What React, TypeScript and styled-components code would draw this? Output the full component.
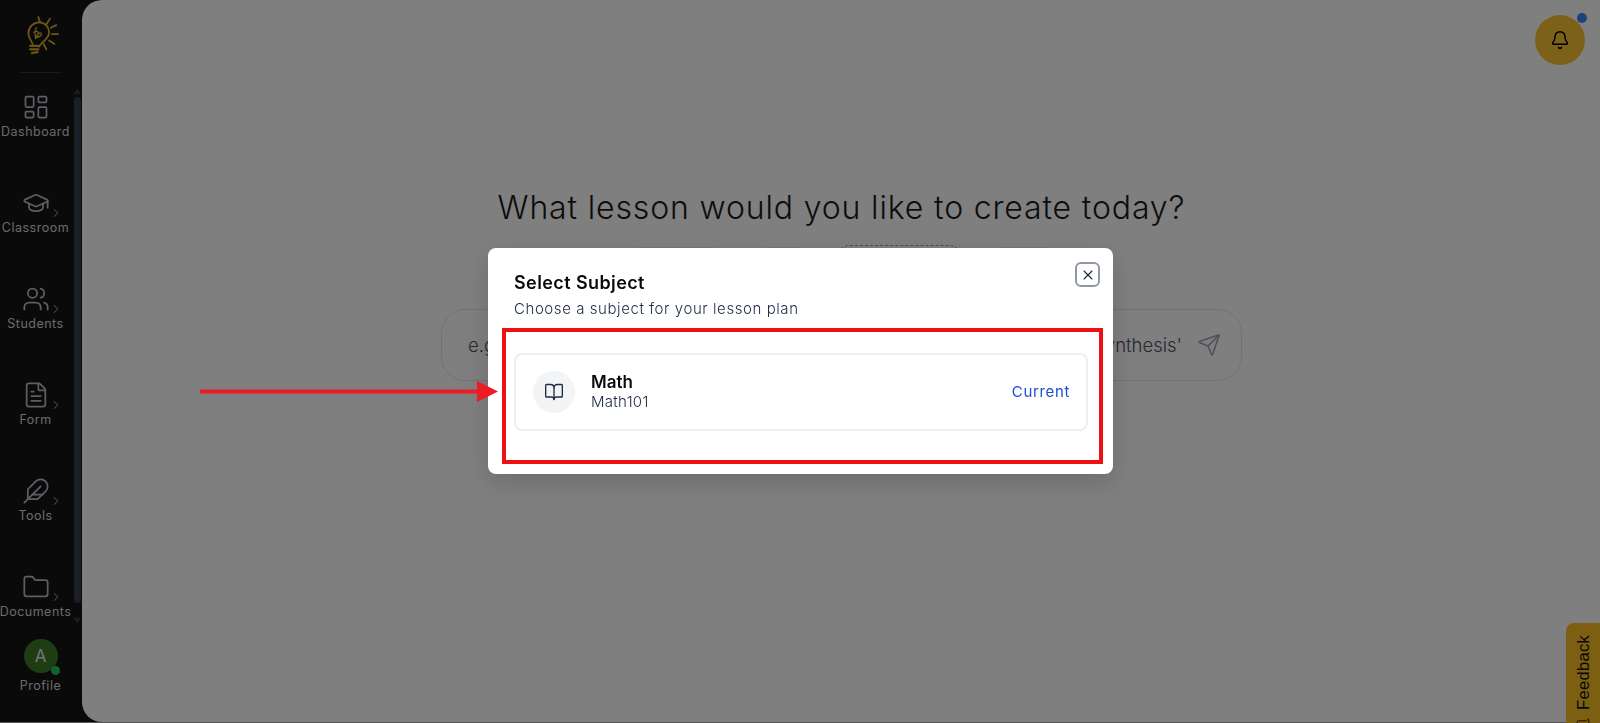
import React from 'react';
import styled, { createGlobalStyle } from 'styled-components';
import {
  Bell,
  BookOpen,
  ChevronRight,
  Feather,
  FileText,
  Folder,
  GraduationCap,
  LayoutDashboard,
  MessageSquarePlus,
  Send,
  Users,
  X,
} from 'lucide-react';

const GlobalStyle = createGlobalStyle`
  html, body {
    margin: 0;
    height: 100%;
    background: #aaaaaa;
    overflow: hidden;
    font-family: "Inter", "Open Sans", "Liberation Sans", sans-serif;
  }
`;

const Shell = styled.div`
  display: flex;
  height: 722px;
  background: #141414;
`;

const Sidebar = styled.aside`
  width: 82px;
  flex-shrink: 0;
  display: flex;
  flex-direction: column;
`;

const LogoBlock = styled.div`
  height: 73px;
  margin: 0 20px 0 20px;
  border-bottom: 1px solid #333333;
  display: flex;
  align-items: flex-start;
  justify-content: center;
  padding-top: 8px;
  box-sizing: border-box;

  svg {
    display: block;
    flex-shrink: 0;
  }
`;

const NavRow = styled.div`
  display: flex;
  height: 558px;
`;

const NavList = styled.nav`
  width: 71px;
  margin-right: 2px;
  padding-top: 20px;
  display: flex;
  flex-direction: column;
  gap: 48px;
  box-sizing: border-box;
`;

const NavItem = styled.div`
  position: relative;
  height: 48px;
  display: flex;
  flex-direction: column;
  align-items: center;
  gap: 2px;
  color: #b9bec8;
`;

const NavLabel = styled.span`
  font-size: 12.5px;
  line-height: 18px;
  letter-spacing: 0.5px;
  font-weight: 400;
  color: #d6d6d6;
  white-space: nowrap;
`;

const NavChevron = styled(ChevronRight)`
  position: absolute;
  left: 49px;
  top: 17px;
  color: #b9bec8;
`;

const ScrollRail = styled.div`
  width: 8px;
  padding-top: 16px;
  display: flex;
  flex-direction: column;
  align-items: center;
`;

const ScrollArrow = styled.div<{ $down?: boolean }>`
  width: 0;
  height: 0;
  border-left: 4px solid transparent;
  border-right: 4px solid transparent;
  ${(p) => (p.$down ? 'border-top: 5px solid #333a47;' : 'border-bottom: 5px solid #333a47;')}
`;

const ScrollThumb = styled.div`
  width: 7px;
  height: 506px;
  margin: 3px 0 15px;
  border-radius: 4px;
  background: #343d4d;
`;

const ProfileBlock = styled.div`
  padding: 8px 1px 0 0;
  display: flex;
  flex-direction: column;
  align-items: center;
  gap: 4px;
`;

const Avatar = styled.div`
  position: relative;
  width: 34px;
  height: 34px;
  border-radius: 50%;
  background: #3f7a25;
  color: #e8e8e8;
  font-size: 17px;
  display: flex;
  align-items: center;
  justify-content: center;

  &::after {
    content: '';
    position: absolute;
    right: -2px;
    bottom: -2px;
    width: 9px;
    height: 9px;
    border-radius: 50%;
    background: #22c55e;
  }
`;

const Main = styled.main`
  flex: 1;
  background: #ffffff;
  border-radius: 20px 0 0 20px;
  display: flex;
  flex-direction: column;
  align-items: center;
  padding: 186px 0 0 1px;
  box-sizing: border-box;
`;

const Heading = styled.h1`
  margin: 0;
  font-size: 32px;
  line-height: 44px;
  font-weight: 300;
  letter-spacing: 0.85px;
  color: #1a1a1a;
  white-space: nowrap;
`;

const ChipRow = styled.div`
  margin-top: 15px;
  height: 40px;
  display: flex;
  align-items: flex-end;
  gap: 24px;
`;

const Chip = styled.div<{ $width: number; $dashed?: boolean }>`
  width: ${(p) => p.$width}px;
  height: ${(p) => (p.$dashed ? 40 : 38)}px;
  box-sizing: border-box;
  border-radius: 14px;
  border: 1px ${(p) => (p.$dashed ? 'dashed #9a9a9a' : 'solid #eef0f3')};
`;

const PromptBox = styled.div`
  margin-top: 24px;
  width: 801px;
  height: 72px;
  box-sizing: border-box;
  border: 1px solid #e5e7eb;
  border-radius: 24px;
  padding: 0 20px 0 26px;
  display: flex;
  align-items: center;
  gap: 15px;
  color: #9ca3af;
`;

const PromptText = styled.span`
  flex: 1;
  font-size: 18.5px;
  font-weight: 300;
  color: #4b5563;
  white-space: nowrap;
  text-align: justify;
  text-align-last: justify;
`;

const BellButton = styled.button`
  position: fixed;
  top: 15px;
  right: 15px;
  width: 50px;
  height: 50px;
  padding: 0;
  border: none;
  border-radius: 50%;
  background: #fdc230;
  color: #000000;
  display: flex;
  align-items: center;
  justify-content: center;

  &::after {
    content: '';
    position: absolute;
    top: -2px;
    right: -2px;
    width: 10px;
    height: 10px;
    border-radius: 50%;
    background: #3b82f6;
  }
`;

const FeedbackTab = styled.div`
  position: fixed;
  right: 0;
  top: 623px;
  height: 120px;
  width: 34px;
  box-sizing: border-box;
  padding-top: 12px;
  border-radius: 8px 0 0 0;
  background: #fbbf24;
  color: #111111;
  display: flex;
  align-items: flex-start;
  justify-content: center;
`;

const FeedbackText = styled.span`
  writing-mode: vertical-rl;
  transform: rotate(180deg);
  display: flex;
  align-items: center;
  gap: 8px;
  font-family: "Liberation Sans", sans-serif;
  font-size: 16.5px;
  letter-spacing: 0.3px;
`;

const Overlay = styled.div`
  position: fixed;
  inset: 0;
  background: rgba(0, 0, 0, 0.5);
  display: flex;
  align-items: center;
  justify-content: center;
`;

const Modal = styled.section`
  position: relative;
  width: 625px;
  box-sizing: border-box;
  margin: 0 0 1px 1px;
  padding: 24px 25px 43px 26px;
  border-radius: 8px;
  background: #ffffff;
  box-shadow: 0 8px 24px rgba(0, 0, 0, 0.15);
`;

const ModalTitle = styled.h2`
  margin: 0;
  font-size: 18px;
  line-height: 22px;
  font-weight: 600;
  letter-spacing: 0.4px;
  color: #0a0a0a;
`;

const ModalHint = styled.p`
  margin: 5px 0 34px;
  font-size: 15px;
  line-height: 20px;
  font-weight: 300;
  letter-spacing: 0.57px;
  color: #1e2a44;
`;

const CloseButton = styled.button`
  position: absolute;
  top: 14px;
  right: 13px;
  width: 25px;
  height: 25px;
  padding: 0;
  box-sizing: border-box;
  border: 2px solid #9097a6;
  border-radius: 6px;
  background: #ffffff;
  color: #1f2937;
  display: flex;
  align-items: center;
  justify-content: center;
`;

const SubjectCard = styled.div`
  height: 78px;
  box-sizing: border-box;
  padding: 0 16px 0 17px;
  border: 2px solid #eceef2;
  border-radius: 8px;
  display: flex;
  align-items: center;
  gap: 16px;
`;

const SubjectIcon = styled.div`
  width: 42px;
  height: 42px;
  border-radius: 50%;
  background: #f3f4f6;
  color: #1f2d44;
  display: flex;
  align-items: center;
  justify-content: center;
`;

const SubjectInfo = styled.div`
  flex: 1;
  padding-bottom: 2px;
  display: flex;
  flex-direction: column;
`;

const SubjectName = styled.span`
  font-size: 17px;
  line-height: 20px;
  font-weight: 600;
  color: #0a0a0a;
`;

const SubjectCode = styled.span`
  font-size: 15px;
  line-height: 19px;
  font-weight: 300;
  letter-spacing: 0.3px;
  color: #1e2a4a;
`;

const CurrentTag = styled.span`
  padding-bottom: 2px;
  font-size: 15px;
  font-weight: 400;
  letter-spacing: 0.65px;
  color: #1d4ed8;
`;

const Highlight = styled.div`
  position: absolute;
  left: 14px;
  top: 80px;
  width: 601px;
  height: 136px;
  box-sizing: border-box;
  border: 4px solid #ee1111;
  pointer-events: none;
`;

const ArrowMark = styled.svg`
  position: absolute;
  z-index: 2;
  left: 200px;
  top: 381px;
`;

const navItems = [
  { label: 'Dashboard', icon: LayoutDashboard, chevron: false },
  { label: 'Classroom', icon: GraduationCap, chevron: true },
  { label: 'Students', icon: Users, chevron: true },
  { label: 'Form', icon: FileText, chevron: true },
  { label: 'Tools', icon: Feather, chevron: true },
  { label: 'Documents', icon: Folder, chevron: true },
];

const Logo = () => (
  <svg width="54" height="54" viewBox="0 0 60 60" fill="none" stroke="#dca92c" strokeWidth="2" strokeLinecap="round">
    <path d="M21 42c0-5-5-7-5-14 0-7 6-12 12-12 7 0 11 6 11 11 0 6-5 9-8 12-2 2-3 3-3 4" />
    <path d="M24 34c-1-6-1-10 1-12M22 27c3-2 5-1 5 1s-3 3-3 5c3 0 8-3 6-5-2-1-4 1-4 3" strokeWidth="1.5" />
    <path d="M27 10l2 6M40 12l-4 6M47 19l-6 3M49 29h-7M45 40l-6-4M36 46l-3-6" />
    <path d="M18 42h9M18 46h9M20 50l6-1" strokeWidth="2.5" />
  </svg>
);

export default function App() {
  return (
    <>
      <GlobalStyle />
      <Shell>
        <Sidebar>
          <LogoBlock>
            <Logo />
          </LogoBlock>
          <NavRow>
            <NavList>
              {navItems.map((item) => (
                <NavItem key={item.label}>
                  <item.icon size={28} strokeWidth={1.5} />
                  <NavLabel>{item.label}</NavLabel>
                  {item.chevron && <NavChevron size={14} strokeWidth={1.6} />}
                </NavItem>
              ))}
            </NavList>
            <ScrollRail>
              <ScrollArrow />
              <ScrollThumb />
              <ScrollArrow $down />
            </ScrollRail>
          </NavRow>
          <ProfileBlock>
            <Avatar>A</Avatar>
            <NavLabel>Profile</NavLabel>
          </ProfileBlock>
        </Sidebar>
        <Main>
          <Heading>What lesson would you like to create today?</Heading>
          <ChipRow>
            <Chip $width={104} />
            <Chip $width={60} />
            <Chip $width={126} $dashed />
            <Chip $width={73} />
          </ChipRow>
          <PromptBox>
            <PromptText>e.g., 'Create a lesson plan for 5th grade science about photosynthesis'</PromptText>
            <Send size={24} strokeWidth={1.6} />
          </PromptBox>
        </Main>
      </Shell>
      <BellButton aria-label="Notifications">
        <Bell size={20} strokeWidth={1.8} />
      </BellButton>
      <FeedbackTab>
        <FeedbackText>
          <MessageSquarePlus size={14} strokeWidth={1.6} />
          Feedback
        </FeedbackText>
      </FeedbackTab>
      <Overlay>
        <ArrowMark width="298" height="21" viewBox="0 0 298 21">
          <path d="M0 10.5h280" stroke="#ed1c24" strokeWidth="4" />
          <path d="M277 0l21 10.5-21 10.5z" fill="#ed1c24" />
        </ArrowMark>
        <Modal>
          <ModalTitle>Select Subject</ModalTitle>
          <ModalHint>Choose a subject for your lesson plan</ModalHint>
          <CloseButton aria-label="Close">
            <X size={16} strokeWidth={1.6} />
          </CloseButton>
          <SubjectCard>
            <SubjectIcon>
              <BookOpen size={20} strokeWidth={1.6} />
            </SubjectIcon>
            <SubjectInfo>
              <SubjectName>Math</SubjectName>
              <SubjectCode>Math101</SubjectCode>
            </SubjectInfo>
            <CurrentTag>Current</CurrentTag>
          </SubjectCard>
          <Highlight />
        </Modal>
      </Overlay>
    </>
  );
}
